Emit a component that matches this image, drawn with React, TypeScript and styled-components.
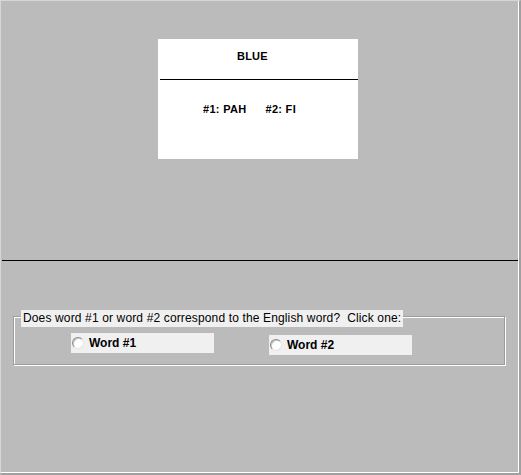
import React from "react";
import styled, { createGlobalStyle } from "styled-components";

const Global = createGlobalStyle`
  html, body { margin: 0; padding: 0; background: #bbbbbb; }
  body { font-family: "Liberation Sans", Arial, sans-serif; }
`;

const Frame = styled.div`
  width: 521px;
  height: 475px;
  box-sizing: border-box;
  background: #bbbbbb;
  border-top: 1px solid #d6d6d6;
  border-left: 1px solid #d6d6d6;
  border-right: 2px solid #a0a0a0;
  border-bottom: 2px solid #a0a0a0;
`;

const Inner = styled.div`
  height: 100%;
  box-sizing: border-box;
  display: flex;
  flex-direction: column;
  border-right: 1px solid #ffffff;
  border-bottom: 1px solid #ffffff;
`;

const TopPane = styled.div`
  height: 259px;
  box-sizing: border-box;
  padding: 38px 0 0 157px;
`;

const Card = styled.div`
  width: 200px;
  height: 120px;
  background: #ffffff;
  display: flex;
  flex-direction: column;
`;

const CardHeader = styled.div`
  height: 40px;
  box-sizing: border-box;
  padding: 11px 0 0 79px;
  font-size: 11px;
  line-height: 13px;
  font-weight: bold;
  letter-spacing: 0.2px;
  color: #000;
`;

const CardRule = styled.div`
  height: 1px;
  margin-left: 2px;
  background: #000;
`;

const CardBody = styled.div`
  display: flex;
  gap: 19px;
  padding: 23px 0 0 45px;
  font-size: 11px;
  line-height: 13px;
  font-weight: bold;
  letter-spacing: 0.3px;
  color: #000;
`;

const Divider = styled.div`
  height: 1px;
  margin-left: 1px;
  background: #000;
`;

const BottomPane = styled.div`
  flex: 1;
  padding: 55px 0 0 12px;
`;

const Group = styled.div`
  position: relative;
  width: 492px;
  height: 49px;
  box-sizing: border-box;
  border: 1px solid #9c9c9c;
  box-shadow: inset 1px 1px 0 #ffffff, 1px 1px 0 #ffffff;
  display: flex;
  align-items: flex-start;
  gap: 55px;
  padding-left: 57px;
`;

const Legend = styled.div`
  position: absolute;
  left: 7px;
  top: -7px;
  height: 17px;
  padding: 0 2px;
  background: #f0f0f0;
  font-size: 12px;
  line-height: 17px;
  letter-spacing: 0.14px;
  color: #000;
  white-space: pre;
`;

const RadioBox = styled.label<{ $dy: number }>`
  margin-top: ${(p) => p.$dy}px;
  width: 143px;
  height: 20px;
  background: #f0f0f0;
  display: flex;
  align-items: center;
  gap: 5px;
  padding-left: 1px;
  box-sizing: border-box;
  font-size: 12px;
  font-weight: bold;
  color: #000;
`;

const RadioDot = styled.span`
  width: 12px;
  height: 12px;
  box-sizing: border-box;
  border-radius: 50%;
  border: 1px solid;
  border-color: #8a8a8a #e4e4e4 #e4e4e4 #8a8a8a;
  background: #ffffff;
  box-shadow: inset 1px 1px 0 #c8c8c8;
`;

export default function App() {
  return (
    <>
      <Global />
      <Frame>
        <Inner>
          <TopPane>
            <Card>
              <CardHeader>BLUE</CardHeader>
              <CardRule />
              <CardBody>
                <span>#1: PAH</span>
                <span>#2: FI</span>
              </CardBody>
            </Card>
          </TopPane>
          <Divider />
          <BottomPane>
            <Group>
              <Legend>Does word #1 or word #2 correspond to the English word?  Click one:</Legend>
              <RadioBox $dy={16}>
                <RadioDot />
                Word #1
              </RadioBox>
              <RadioBox $dy={18}>
                <RadioDot />
                Word #2
              </RadioBox>
            </Group>
          </BottomPane>
        </Inner>
      </Frame>
    </>
  );
}
